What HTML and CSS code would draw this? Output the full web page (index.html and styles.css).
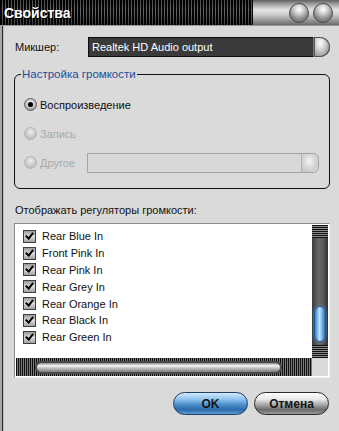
FILE: index.html
```html
<!DOCTYPE html>
<html>

<head>
    <meta charset="utf-8">
    <link rel="stylesheet" href="styles.css">
</head>

<body>
    <div class="window">
        <div class="titlebar">
            <span class="title">Свойства</span>
            <div class="captionBtns">
                <span class="orb"></span>
                <span class="orb"></span>
            </div>
        </div>

        <div class="content">
            <div class="mixerRow">
                <span class="mixerLabel">Микшер:</span>
                <div class="combo darkCombo">
                    <span class="comboText">Realtek HD Audio output</span>
                    <span class="comboBtn"></span>
                </div>
            </div>

            <fieldset class="group">
                <legend>Настройка громкости</legend>
                <div class="radioRow">
                    <span class="radio checked"></span>
                    <span>Воспроизведение</span>
                </div>
                <div class="radioRow disabled">
                    <span class="radio"></span>
                    <span>Запись</span>
                </div>
                <div class="radioRow disabled">
                    <span class="radio"></span>
                    <span class="otherText">Другое</span>
                    <div class="combo offCombo">
                        <span class="comboText"></span>
                        <span class="comboBtn offBtn"></span>
                    </div>
                </div>
            </fieldset>

            <div class="listLabel">Отображать регуляторы громкости:</div>

            <div class="listbox">
                <div class="listMain">
                    <div class="items">
                        <div class="item"><span class="check"></span>Rear Blue In</div>
                        <div class="item"><span class="check"></span>Front Pink In</div>
                        <div class="item"><span class="check"></span>Rear Pink In</div>
                        <div class="item"><span class="check"></span>Rear Grey In</div>
                        <div class="item"><span class="check"></span>Rear Orange In</div>
                        <div class="item"><span class="check"></span>Rear Black In</div>
                        <div class="item"><span class="check"></span>Rear Green In</div>
                    </div>
                    <div class="vscroll">
                        <div class="vstripes"></div>
                        <div class="vtrack">
                            <div class="vthumb"></div>
                        </div>
                        <div class="vstripes"></div>
                    </div>
                </div>
                <div class="hrow">
                    <div class="hscroll">
                        <div class="hstripes left"></div>
                        <div class="hthumb"></div>
                        <div class="hstripes right"></div>
                    </div>
                    <div class="corner"></div>
                </div>
            </div>

            <div class="buttons">
                <button class="btn okBtn">OK</button>
                <button class="btn cancelBtn">Отмена</button>
            </div>
        </div>
    </div>
</body>

</html>
```

FILE: styles.css
```css
html,
body {
    margin: 0;
    height: 100%;
    background: #dadada;
}

.window {
    width: 339px;
    height: 431px;
    display: flex;
    flex-direction: column;
    font-family: "Liberation Sans", Arial, sans-serif;
    font-size: 11px;
    color: #111;
    overflow: hidden;
}

/* title bar: black stripes on the left, metal on the right */
.titlebar {
    height: 26px;
    flex-shrink: 0;
    display: flex;
    align-items: center;
    justify-content: space-between;
    background:
        linear-gradient(to bottom, rgba(0, 0, 0, 0.35), rgba(0, 0, 0, 0) 40%, rgba(0, 0, 0, 0.45)),
        repeating-linear-gradient(to right, #050505 0 2px, #6b6b6b 2px 3px);
    position: relative;
    border-bottom: 1px solid #9a9a9a;
    box-sizing: border-box;
}

.titlebar::after {
    content: "";
    position: absolute;
    top: 0;
    bottom: 0;
    left: 253px;
    right: 0;
    background: linear-gradient(to bottom, #5e5e5e 0, #9c9c9c 15%, #e6e6e6 40%, #c9c9c9 60%, #8d8d8d 85%, #6a6a6a 100%);
}

.title {
    margin-left: 4px;
    color: #fff;
    font-weight: bold;
    font-size: 14px;
    text-shadow: 1px 1px 0 #000;
}

.captionBtns {
    display: flex;
    gap: 4px;
    margin-right: 6px;
    position: relative;
    z-index: 1;
}

.orb {
    width: 20px;
    height: 20px;
    border-radius: 50%;
    box-sizing: border-box;
    border: 1px solid #4a4a4a;
    background: radial-gradient(circle at 50% 30%, #ffffff 0, #d8d8d8 25%, #8f8f8f 60%, #5a5a5a 100%);
}

.content {
    flex: 1;
    display: flex;
    flex-direction: column;
    padding: 11px 9px 0 14px;
    background:
        linear-gradient(to right, #a9a9a9 0 2px, #2b2b2b 2px 3px, #bcbcbc 3px 4px, #dadada 4px);
}

.content > * {
    flex-shrink: 0;
}

.mixerRow {
    display: flex;
    align-items: center;
    height: 20px;
}

.mixerLabel {
    width: 73px;
    padding-left: 1px;
}

.combo {
    flex: 1;
    height: 20px;
    display: flex;
    box-sizing: border-box;
}

.darkCombo {
    border: 1px solid #0c0c0c;
    background: #3a3a3a;
    color: #fff;
    border-right: none;
    border-radius: 0 10px 10px 0;
}

.comboText {
    flex: 1;
    padding: 3px 0 0 3px;
    font-size: 11px;
}

.comboBtn {
    width: 16px;
    border-radius: 0 10px 10px 0;
    background: radial-gradient(ellipse at 40% 30%, #ffffff 0, #d3d3d3 35%, #8e8e8e 80%, #5c5c5c 100%);
    border-left: 1px solid #777;
    margin: -1px 0;
    box-shadow: inset 0 0 0 1px #555;
}

.group {
    margin: 11px 0 0 0;
    padding: 9px 0 0 9px;
    border: 1px solid #111;
    border-radius: 6px;
    height: 121px;
    box-sizing: border-box;
}

.group legend {
    color: #1d4f9c;
    padding: 0 1px;
    margin-left: -3px;
    line-height: 13px;
    font-size: 11.5px;
}

.radioRow {
    display: flex;
    align-items: center;
    height: 29px;
    gap: 3px;
}

.radio {
    width: 13px;
    height: 13px;
    border-radius: 50%;
    box-sizing: border-box;
    border: 1px solid #5d5d5d;
    background: radial-gradient(circle at 50% 35%, #f2f2f2 0, #bdbdbd 55%, #7a7a7a 100%);
    display: flex;
    align-items: center;
    justify-content: center;
}

.radio.checked::after {
    content: "";
    width: 5px;
    height: 5px;
    border-radius: 50%;
    background: #000;
}

.disabled {
    color: #a9a9a9;
}

.disabled .radio {
    border-color: #b4b4b4;
    background: radial-gradient(circle at 50% 35%, #eeeeee 0, #c8c8c8 55%, #b0b0b0 100%);
}

.otherText {
    width: 44px;
}

.offCombo {
    flex: none;
    width: 232px;
    border: 1px solid #a3a3a3;
    background: #d8d8d8;
    border-radius: 0 6px 6px 0;
}

.offBtn {
    background: radial-gradient(ellipse at 45% 40%, #f3f3f3 0, #d6d6d6 50%, #b9b9b9 100%);
    border-left: 1px solid #b0b0b0;
    box-shadow: none;
    margin: 0;
}

.listLabel {
    margin-top: 15px;
    padding-left: 1px;
    height: 15px;
}

.listbox {
    margin-top: 4px;
    height: 155px;
    box-sizing: border-box;
    border: 1px solid #8c8c8c;
    border-right-color: #f2f2f2;
    border-bottom-color: #f2f2f2;
    background: #fff;
    display: flex;
    flex-direction: column;
    padding: 1px;
}

.listMain {
    flex: 1;
    display: flex;
}

.items {
    flex: 1;
    padding: 3px 0 0 7px;
    font-size: 11px;
}

.item {
    height: 16.8px;
    display: flex;
    align-items: center;
    gap: 6px;
}

.check {
    width: 13px;
    height: 13px;
    box-sizing: border-box;
    border: 1px solid #3f3f3f;
    background: linear-gradient(to bottom, #9b9b9b, #dcdcdc 50%, #a0a0a0);
    position: relative;
}

.check::after {
    content: "";
    position: absolute;
    left: 3px;
    top: 0px;
    width: 3px;
    height: 6px;
    border: solid #000;
    border-width: 0 2px 2px 0;
    transform: rotate(40deg);
}

.vscroll {
    width: 16px;
    display: flex;
    flex-direction: column;
    background: #3a3a3a;
}

.vstripes {
    height: 13px;
    background: repeating-linear-gradient(to bottom, #111 0 1px, #8a8a8a 1px 2px);
}

.vtrack {
    flex: 1;
    background: linear-gradient(to right, #3c3c3c, #686868 40%, #5a5a5a 70%, #2f2f2f);
    padding-top: 68px;
}

.vthumb {
    width: 12px;
    height: 36px;
    margin-left: 2px;
    box-sizing: border-box;
    border-radius: 6px;
    border: 1px solid #1b5b9c;
    background: linear-gradient(to right, #3c7dc0, #bfe4ff 45%, #7bb8ea 70%, #2a6aad);
    box-shadow: 0 0 2px #4aa0ff;
}

.hrow {
    height: 18px;
    display: flex;
}

.hscroll {
    flex: 1;
    display: flex;
    align-items: center;
    background: repeating-linear-gradient(to right, #0e0e0e 0 1px, #7a7a7a 1px 2px);
}

.hstripes {
    height: 100%;
}

.hstripes.left {
    width: 19px;
}

.hstripes.right {
    flex: 1;
}

.hthumb {
    width: 247px;
    height: 13px;
    box-sizing: border-box;
    border-radius: 7px;
    border: 2px solid #4a4a4a;
    background: linear-gradient(to bottom, #8a8a8a, #f4f4f4 30%, #bdbdbd 60%, #7a7a7a);
}

.corner {
    width: 16px;
    background: #dadada;
}

.buttons {
    display: flex;
    justify-content: flex-end;
    gap: 6px;
    margin-top: 14px;
    padding-right: 1px;
}

.btn {
    width: 75px;
    height: 23px;
    border-radius: 12px;
    font-family: "Liberation Sans", Arial, sans-serif;
    font-weight: bold;
    font-size: 12px;
    color: #141414;
    padding: 0;
}

.okBtn {
    border: 1px solid #1e3f66;
    background: linear-gradient(to bottom, #d4e9fb 0, #8fc3ee 30%, #4f8fcc 55%, #2b6aa8 80%, #5f9ad3 100%);
}

.cancelBtn {
    border: 1px solid #2a2a2a;
    background: linear-gradient(to bottom, #ffffff 0, #e9e9e9 30%, #a9a9a9 55%, #6a6a6a 80%, #9c9c9c 100%);
}
```
